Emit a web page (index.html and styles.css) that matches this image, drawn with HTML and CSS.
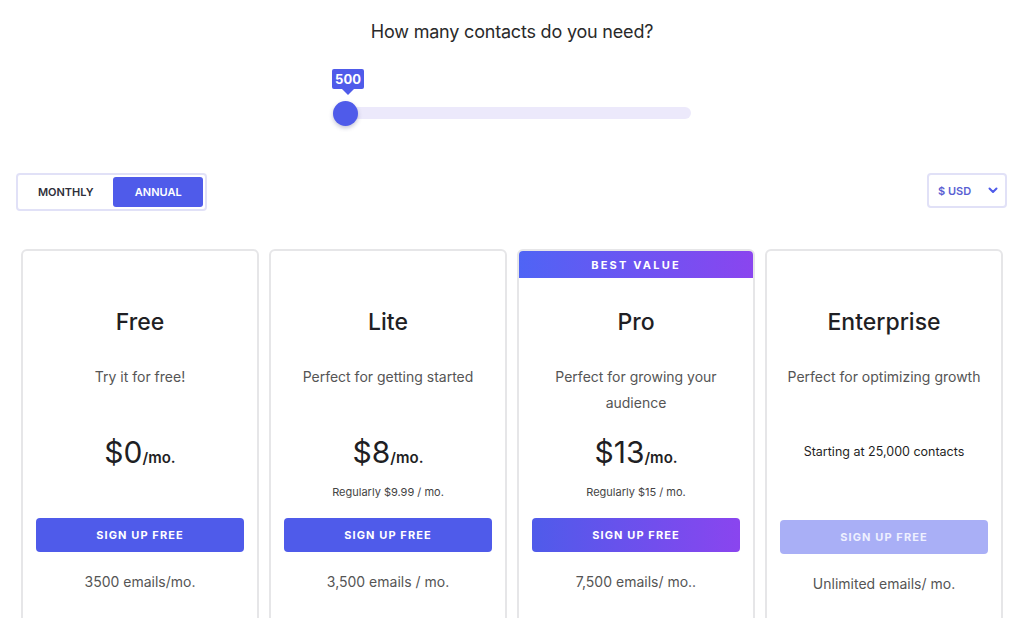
FILE: index.html
```html
<!DOCTYPE html>
<html>
<head>
<meta charset="utf-8">
<link rel="stylesheet" href="styles.css">
</head>
<body>
<div class="page">
  <h1 class="question">How many contacts do you need?</h1>
  <div class="slider">
    <div class="track"></div>
    <div class="thumb"></div>
    <div class="bubble">500</div>
  </div>

  <div class="controls">
    <div class="toggle">
      <span class="opt">MONTHLY</span>
      <span class="opt active">ANNUAL</span>
    </div>
    <div class="currency">
      <span>$ USD</span>
      <svg class="chev" width="10" height="7" viewBox="0 0 10 7"><path d="M1.5 1.5 L5 5 L8.5 1.5" fill="none" stroke="#4f5bea" stroke-width="2" stroke-linecap="round" stroke-linejoin="round"/></svg>
    </div>
  </div>

  <div class="cards">
    <div class="card">
      <h2 class="plan">Free</h2>
      <p class="desc">Try it for free!</p>
      <div class="pricebox">
        <div class="price">$0<span class="per">/mo.</span></div>
      </div>
      <a class="btn">SIGN UP FREE</a>
      <p class="emails">3500 emails/mo.</p>
    </div>
    <div class="card">
      <h2 class="plan">Lite</h2>
      <p class="desc">Perfect for getting started</p>
      <div class="pricebox">
        <div class="price">$8<span class="per">/mo.</span></div>
        <div class="regular">Regularly $9.99 / mo.</div>
      </div>
      <a class="btn">SIGN UP FREE</a>
      <p class="emails">3,500 emails / mo.</p>
    </div>
    <div class="card featured">
      <div class="ribbon">BEST VALUE</div>
      <h2 class="plan">Pro</h2>
      <p class="desc">Perfect for growing your audience</p>
      <div class="pricebox">
        <div class="price">$13<span class="per">/mo.</span></div>
        <div class="regular">Regularly $15 / mo.</div>
      </div>
      <a class="btn gradient">SIGN UP FREE</a>
      <p class="emails">7,500 emails/ mo..</p>
    </div>
    <div class="card">
      <h2 class="plan">Enterprise</h2>
      <p class="desc">Perfect for optimizing growth</p>
      <div class="pricebox">
        <div class="starting">Starting at 25,000 contacts</div>
      </div>
      <a class="btn disabled">SIGN UP FREE</a>
      <p class="emails">Unlimited emails/ mo.</p>
    </div>
  </div>
</div>
</body>
</html>
```

FILE: styles.css
```css
* { box-sizing: border-box; }
html, body { margin: 0; padding: 0; background: #fff; }
body {
  font-family: Inter, "Helvetica Neue", Arial, sans-serif;
  color: #222;
  overflow: hidden;
}
.page { padding-top: 20px; }

.question {
  margin: 0;
  text-align: center;
  font-size: 18px;
  font-weight: 400;
  letter-spacing: -0.2px;
  line-height: 24px;
  color: #2a2a2a;
}

.slider {
  position: relative;
  width: 358px;
  height: 26px;
  margin: 56px auto 0;
}
.track {
  position: absolute;
  left: 0; right: 0; top: 7px;
  height: 12px;
  border-radius: 6px;
  background: #ece9fb;
}
.thumb {
  position: absolute;
  left: 0; top: 1px;
  width: 25px; height: 25px;
  border-radius: 50%;
  background: #4f5bea;
  box-shadow: 0 2px 4px rgba(60, 60, 120, 0.3);
}
.bubble {
  position: absolute;
  left: -1px; top: -31px;
  width: 32px; height: 20px;
  background: #4f5bea;
  color: #fff;
  font-size: 13px;
  font-weight: 700;
  line-height: 20px;
  text-align: center;
  border-radius: 2px;
}
.bubble::after {
  content: "";
  position: absolute;
  left: 10px; bottom: -6px;
  border-left: 6px solid transparent;
  border-right: 6px solid transparent;
  border-top: 6px solid #4f5bea;
}

.controls {
  display: flex;
  justify-content: space-between;
  align-items: flex-start;
  padding: 0 17px 0 16px;
  margin-top: 47px;
}
.toggle {
  display: flex;
  width: 191px;
  height: 38px;
  padding: 2px 2px 2px 0;
  border: 2px solid #e1e1f7;
  border-radius: 4px;
  justify-content: flex-end;
}
.opt {
  display: flex;
  align-items: center;
  justify-content: center;
  width: 96px;
  font-size: 11px;
  font-weight: 600;
  color: #2f2f3a;
  border-radius: 3px;
}
.opt.active {
  width: 90px;
  background: #4f5bea;
  color: #fff;
}
.currency {
  display: flex;
  align-items: center;
  justify-content: space-between;
  width: 80px;
  height: 35px;
  padding: 0 7px 0 9px;
  border: 2px solid #e1e1f7;
  border-radius: 4px;
  font-size: 11px;
  font-weight: 600;
  color: #5a5fd3;
}

.cards {
  display: grid;
  grid-template-columns: repeat(4, 238px);
  gap: 10px;
  padding: 0 21px;
  margin-top: 38px;
}
.card {
  position: relative;
  height: 400px;
  border: 2px solid #e6e6e8;
  border-radius: 6px;
  padding: 56px 13px 0;
  text-align: center;
  overflow: hidden;
}
.ribbon {
  position: absolute;
  left: 0; right: 0; top: 0;
  height: 27px;
  line-height: 28px;
  background: linear-gradient(90deg, #4f64f5, #8a45ef);
  color: #fff;
  font-size: 11px;
  font-weight: 700;
  letter-spacing: 2.2px;
}
.plan {
  margin: 0;
  font-size: 23px;
  font-weight: 500;
  line-height: 30px;
  color: #1f1f24;
}
.desc {
  margin: 27px 0 0;
  height: 52px;
  font-size: 14px;
  line-height: 26px;
  color: #555;
}
.pricebox {
  height: 102px;
  padding-top: 16px;
}
.price {
  font-size: 30px;
  font-weight: 400;
  line-height: 40px;
  color: #1f1f24;
}
.per {
  font-size: 15px;
  font-weight: 600;
}
.regular {
  margin-top: 6px;
  font-size: 11px;
  line-height: 16px;
  color: #444;
}
.starting {
  padding-top: 10px;
  font-size: 12.5px;
  line-height: 20px;
  color: #1f1f24;
}
.btn {
  display: block;
  height: 34px;
  line-height: 34px;
  border-radius: 4px;
  background: #4f5bea;
  color: #fff;
  font-size: 11px;
  font-weight: 700;
  letter-spacing: 1.1px;
}
.btn.gradient { background: linear-gradient(90deg, #4f5bea, #8a45ef); }
.btn.disabled { background: #a9aff6; color: #eef0ff; margin-top: 2px; }
.emails {
  margin: 20px 0 0;
  font-size: 14px;
  line-height: 20px;
  color: #555;
}
```
